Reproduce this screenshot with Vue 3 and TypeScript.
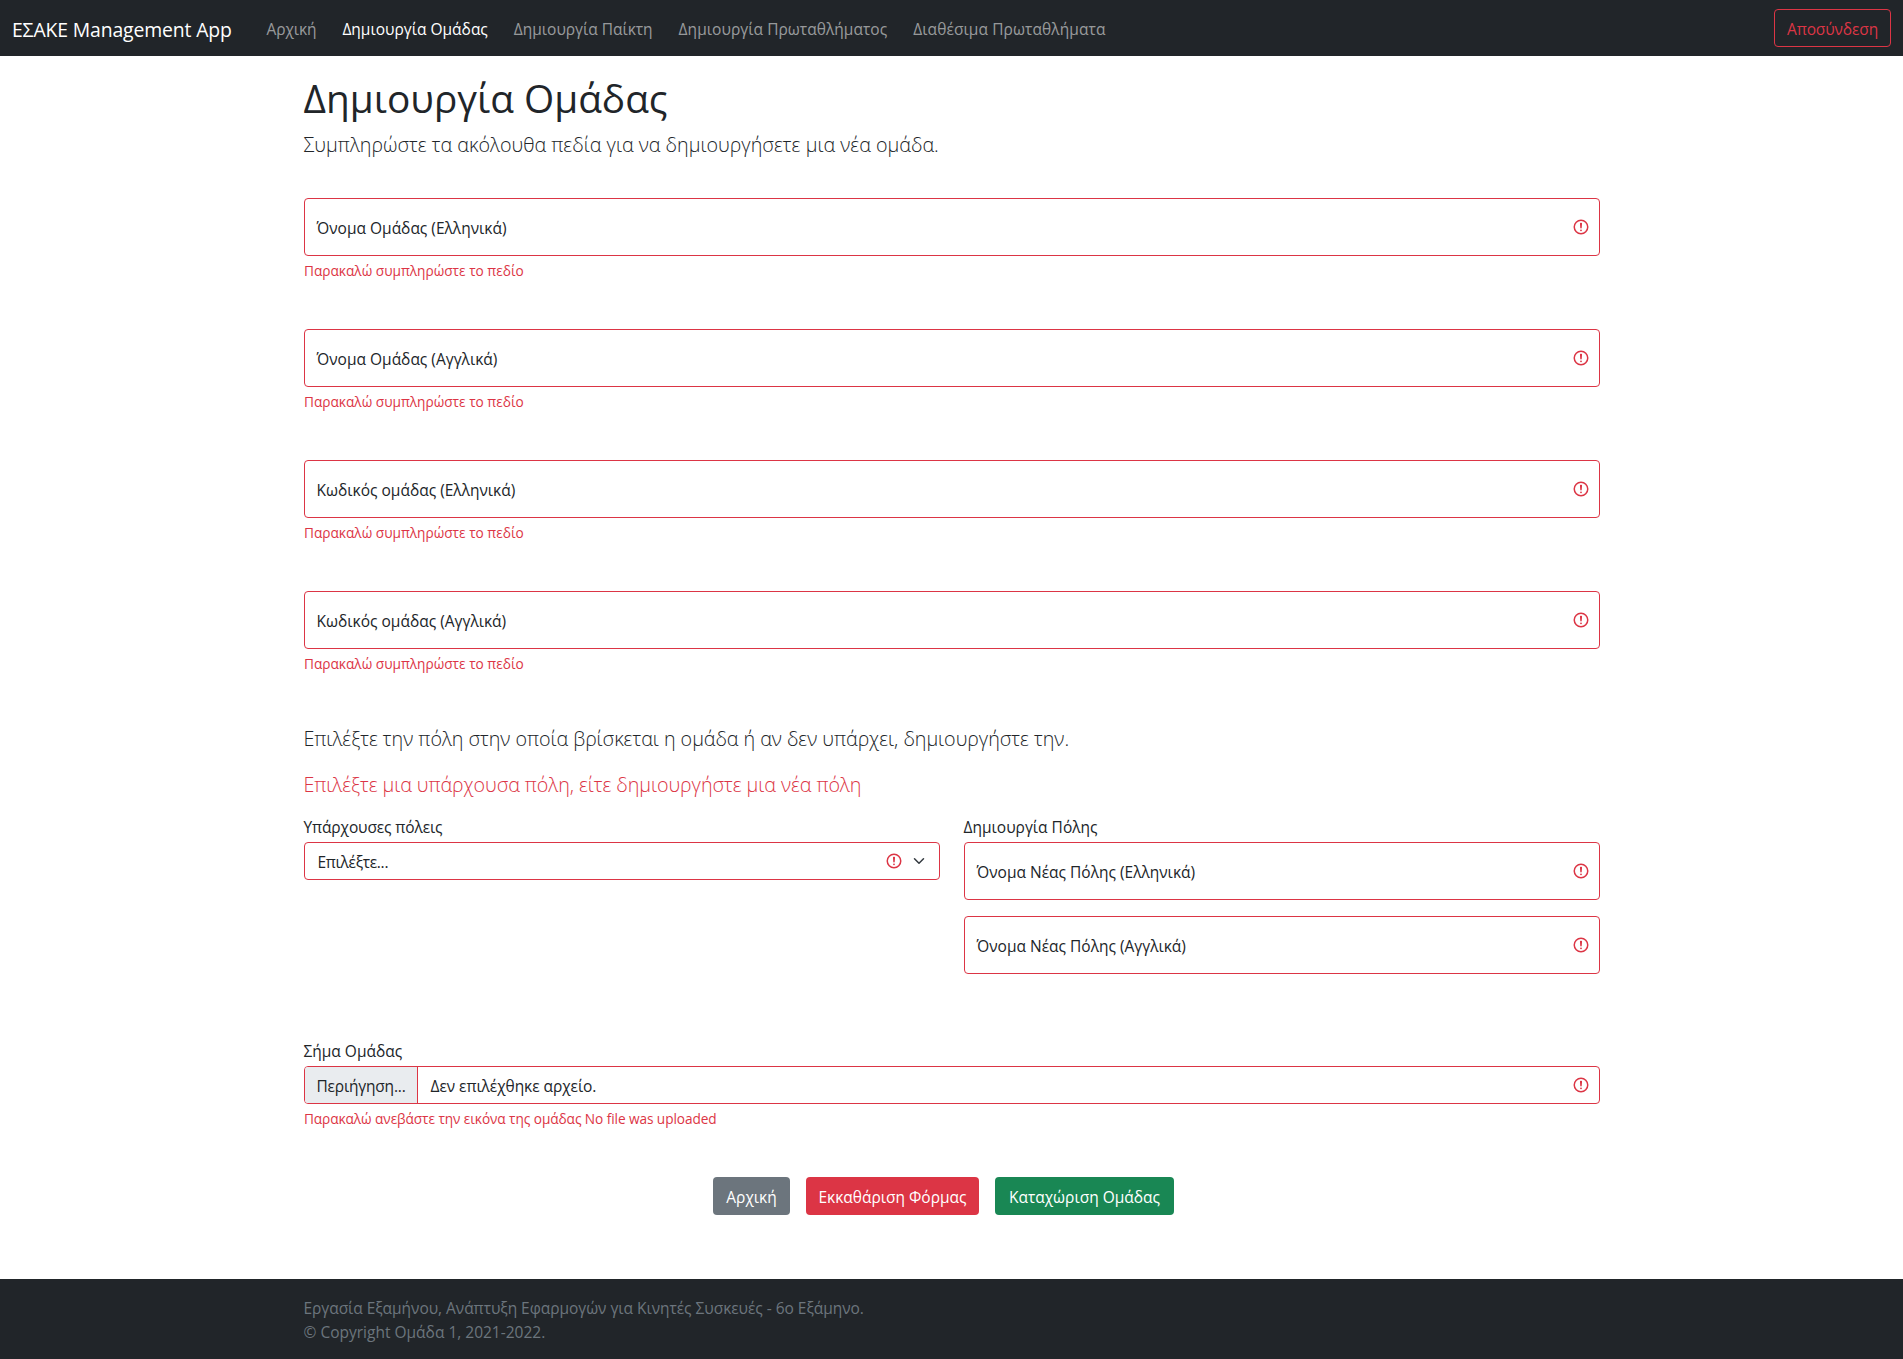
<script setup lang="ts">
import { ref } from 'vue'

interface NavItem {
  text: string
  tracking: number
}

const nav: NavItem[] = [
  { text: 'Αρχική', tracking: -0.1 },
  { text: 'Δημιουργία Ομάδας', tracking: 0 },
  { text: 'Δημιουργία Παίκτη', tracking: -0.02 },
  { text: 'Δημιουργία Πρωταθλήματος', tracking: 0.04 },
  { text: 'Διαθέσιμα Πρωταθλήματα', tracking: 0.09 },
]
const active = ref(1)

const fields: string[] = [
  'Όνομα Ομάδας (Ελληνικά)',
  'Όνομα Ομάδας (Αγγλικά)',
  'Κωδικός ομάδας (Ελληνικά)',
  'Κωδικός ομάδας (Αγγλικά)',
]
const cityFields: string[] = ['Όνομα Νέας Πόλης (Ελληνικά)', 'Όνομα Νέας Πόλης (Αγγλικά)']
</script>

<template>
  <div class="page">
    <svg class="defs" width="0" height="0" aria-hidden="true">
      <symbol id="invalid" viewBox="0 0 12 12">
        <circle cx="6" cy="6" r="4.5" fill="none" stroke="#dc3545" />
        <path d="M5.8 3.6h.4L6 6.5z" fill="none" stroke="#dc3545" stroke-linejoin="round" />
        <circle cx="6" cy="8.2" r=".6" fill="#dc3545" />
      </symbol>
    </svg>

    <header class="navbar">
      <a class="brand">ΕΣΑΚΕ Management App</a>
      <nav class="links">
        <a
          v-for="(item, i) in nav"
          :key="item.text"
          class="link"
          :class="{ active: i === active }"
          :style="{ letterSpacing: item.tracking + 'px' }"
          @click="active = i"
        >{{ item.text }}</a>
      </nav>
      <button class="btn logout" type="button">Αποσύνδεση</button>
    </header>

    <main class="container">
      <h1>Δημιουργία Ομάδας</h1>
      <p class="lead intro">Συμπληρώστε τα ακόλουθα πεδία για να δημιουργήσετε μια νέα ομάδα.</p>

      <div class="fields">
        <div v-for="f in fields" :key="f">
          <div class="floating">
            <span>{{ f }}</span>
            <svg class="icon"><use href="#invalid" /></svg>
          </div>
          <div class="feedback">Παρακαλώ συμπληρώστε το πεδίο</div>
        </div>
      </div>

      <p class="lead city-hint">Επιλέξτε την πόλη στην οποία βρίσκεται η ομάδα ή αν δεν υπάρχει, δημιουργήστε την.</p>
      <p class="lead city-error">Επιλέξτε μια υπάρχουσα πόλη, είτε δημιουργήστε μια νέα πόλη</p>

      <div class="row">
        <div class="col">
          <div class="label existing">Υπάρχουσες πόλεις</div>
          <div class="control select">
            <span class="value">Επιλέξτε...</span>
            <svg class="icon"><use href="#invalid" /></svg>
            <svg class="chevron" viewBox="0 0 16 16">
              <path d="M2 5l6 6 6-6" fill="none" stroke="#343a40" stroke-width="2" stroke-linecap="round" stroke-linejoin="round" />
            </svg>
          </div>
        </div>
        <div class="col">
          <div class="label">Δημιουργία Πόλης</div>
          <div class="stack">
            <div v-for="f in cityFields" :key="f" class="floating">
              <span>{{ f }}</span>
              <svg class="icon"><use href="#invalid" /></svg>
            </div>
          </div>
        </div>
      </div>

      <div class="logo">
        <div class="label">Σήμα Ομάδας</div>
        <div class="control file">
          <span class="browse">Περιήγηση...</span>
          <span class="value">Δεν επιλέχθηκε αρχείο.</span>
          <svg class="icon"><use href="#invalid" /></svg>
        </div>
        <div class="feedback upload">Παρακαλώ ανεβάστε την εικόνα της ομάδας No file was uploaded</div>
      </div>

      <div class="actions">
        <button class="btn home" type="button">Αρχική</button>
        <button class="btn reset" type="button">Εκκαθάριση Φόρμας</button>
        <button class="btn submit" type="button">Καταχώριση Ομάδας</button>
      </div>
    </main>

    <footer class="footer">
      <div class="container">
        <div class="course">Εργασία Εξαμήνου, Ανάπτυξη Εφαρμογών για Κινητές Συσκευές - 6ο Εξάμηνο.</div>
        <div>© Copyright Ομάδα 1, 2021-2022.</div>
      </div>
    </footer>
  </div>
</template>

<style>
body {
  margin: 0;
  background: #fff;
}
</style>

<style scoped>
.page {
  font-family: 'Open Sans', 'Noto Sans', sans-serif;
  font-size: 15.5px;
  line-height: 24px;
  color: #212529;
}
.page *,
.page {
  box-sizing: border-box;
}
.defs {
  position: absolute;
}
.navbar {
  display: flex;
  align-items: flex-start;
  height: 56px;
  padding: 0 12px;
  background: #212529;
}
.brand {
  width: 220.5px;
  margin-right: 26px;
  padding-top: 15px;
  font-size: 19.4px;
  line-height: 30px;
  letter-spacing: -0.15px;
  white-space: nowrap;
  color: #fff;
}
.links {
  display: flex;
  gap: 10px;
}
.link {
  padding: 17px 8px 0;
  white-space: nowrap;
  color: rgba(255, 255, 255, 0.55);
  cursor: pointer;
}
.link.active {
  color: #fff;
}
.btn {
  height: 38px;
  padding: 7px 0 5px;
  border: 1px solid transparent;
  border-radius: 4px;
  font: inherit;
  text-align: center;
  white-space: nowrap;
  color: #fff;
}
.logout {
  width: 117px;
  margin: 9px 0 0 auto;
  border-color: #dc3545;
  background: transparent;
  letter-spacing: -0.12px;
  color: #dc3545;
}
.container {
  width: 1320px;
  margin: 0 auto;
  padding: 0 12px;
}
h1 {
  margin: 0;
  padding-top: 18px;
  font-size: 38.8px;
  font-weight: 400;
  line-height: 48px;
}
.lead {
  margin: 0;
  font-size: 19.72px;
  font-weight: 300;
  line-height: 30px;
}
.intro {
  margin: 8px 0 38px;
}
.city-hint {
  margin: 50px 0 16px;
  letter-spacing: -0.04px;
}
.city-error {
  margin-bottom: 15px;
  letter-spacing: -0.07px;
  color: #dc3545;
}
.fields {
  display: flex;
  flex-direction: column;
  gap: 48px;
}
.floating {
  display: flex;
  align-items: center;
  justify-content: space-between;
  height: 58px;
  padding: 0 9px 0 12px;
  border: 1px solid #dc3545;
  border-radius: 4px;
}
.floating span {
  padding-top: 2px;
}
.icon {
  flex: none;
  width: 18px;
  height: 18px;
}
.feedback {
  margin-top: 4px;
  padding-left: 0.5px;
  font-size: 13.66px;
  line-height: 21px;
  color: #dc3545;
}
.upload {
  letter-spacing: -0.08px;
}
.row {
  display: flex;
  gap: 24px;
}
.col {
  flex: 1;
}
.label {
  height: 24px;
  margin-bottom: 3px;
}
.existing {
  letter-spacing: -0.12px;
}
.stack {
  display: flex;
  flex-direction: column;
  gap: 16px;
}
.control {
  display: flex;
  align-items: center;
  height: 38px;
  border: 1px solid #dc3545;
  border-radius: 4px;
}
.value {
  flex: 1;
  padding-top: 2px;
}
.select {
  padding: 0 12px 0 13px;
  letter-spacing: -0.3px;
}
.select .icon {
  margin-right: 8px;
}
.chevron {
  width: 16px;
  height: 12px;
}
.logo {
  margin-top: 65px;
}
.file {
  padding-right: 9px;
  overflow: hidden;
}
.browse {
  width: 113.5px;
  height: 36px;
  margin-right: 12.5px;
  padding: 7px 0 0 12px;
  border-right: 1px solid #dc3545;
  background: #e9ecef;
  letter-spacing: -0.2px;
}
.file .value {
  letter-spacing: -0.06px;
}
.actions {
  display: flex;
  justify-content: center;
  margin: 48px 0 64px;
}
.actions .btn {
  margin-right: 16px;
}
.home {
  width: 77px;
  background: #6c757d;
}
.reset {
  width: 173px;
  background: #dc3545;
}
.submit {
  width: 179px;
  background: #198754;
}
.footer {
  height: 80px;
  padding-top: 17px;
  background: #212529;
  color: #6c757d;
}
.course {
  letter-spacing: -0.04px;
}
</style>
